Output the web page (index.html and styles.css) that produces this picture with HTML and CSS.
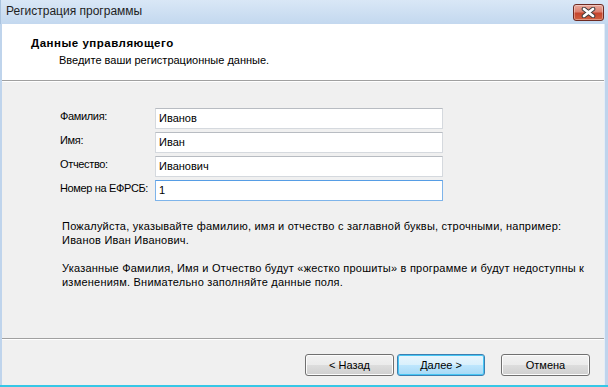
FILE: index.html
```html
<!DOCTYPE html>
<html lang="ru">
<head>
<meta charset="utf-8">
<title>Регистрация программы</title>
<link rel="stylesheet" href="styles.css">
</head>
<body>
<div class="window">
  <div class="titlebar">
    <span class="title">Регистрация программы</span>
    <span class="close">
      <svg width="15" height="11" viewBox="0 0 15 11">
        <path d="M3 2 L12 9 M12 2 L3 9" stroke="#3b3b3b" stroke-width="4.6" stroke-linecap="round"/>
        <path d="M3 2 L12 9 M12 2 L3 9" stroke="#ffffff" stroke-width="2.8" stroke-linecap="round"/>
      </svg>
    </span>
  </div>
  <div class="client">
    <div class="header">
      <div class="heading">Данные управляющего</div>
      <div class="subheading">Введите ваши регистрационные данные.</div>
    </div>
    <div class="content">
      <div class="form">
        <label class="label">Фамилия:</label>
        <div class="field">Иванов</div>
        <label class="label">Имя:</label>
        <div class="field">Иван</div>
        <label class="label">Отчество:</label>
        <div class="field">Иванович</div>
        <label class="label">Номер на ЕФРСБ:</label>
        <div class="field focus">1</div>
      </div>
      <p class="note">Пожалуйста, указывайте фамилию, имя и отчество с заглавной буквы, строчными, например:<br>Иванов Иван Иванович.</p>
      <p class="note">Указанные Фамилия, Имя и Отчество будут «жестко прошиты» в программе и будут недоступны к<br>изменениям. Внимательно заполняйте данные поля.</p>
    </div>
    <div class="footer">
      <button class="btn">&lt; Назад</button>
      <button class="btn default">Далее &gt;</button>
      <button class="btn cancel">Отмена</button>
    </div>
  </div>
</div>
</body>
</html>
```

FILE: styles.css
```css
html, body {
  margin: 0;
  padding: 0;
}
body {
  width: 608px;
  height: 387px;
  overflow: hidden;
  font-family: Tahoma, "Liberation Sans", Arial, sans-serif;
  font-size: 11px;
  color: #000;
}
.window {
  width: 608px;
  height: 387px;
  box-sizing: border-box;
  display: flex;
  flex-direction: column;
  background: #bfd4ec;
  border-bottom: 2px solid #36c7e6;
}
.titlebar {
  height: 24px;
  flex: 0 0 24px;
  display: flex;
  align-items: flex-start;
  background: linear-gradient(#d9e7f6, #c3d8ef);
  border-left: 1px solid #a9c3df;
}
.title {
  font-family: "Liberation Sans", Arial, sans-serif;
  font-size: 12px;
  line-height: 23px;
  padding-left: 5px;
  color: #1e1e1e;
}
.close {
  margin-left: auto;
  margin-right: 4px;
  margin-top: 4px;
  width: 31px;
  height: 17px;
  box-sizing: border-box;
  border: 1px solid #6d2a22;
  border-radius: 3px;
  background: linear-gradient(#e9a99c 0%, #dc8170 45%, #c6452d 55%, #d0603f 100%);
  box-shadow: inset 0 0 0 1px rgba(255,255,255,0.35);
  display: flex;
  align-items: center;
  justify-content: center;
}
.client {
  flex: 1;
  display: flex;
  flex-direction: column;
  margin-left: 2px;
  margin-right: 4px;
  background: #f0f0f0;
  box-shadow: 1px 0 0 #e4edf7;
}
.header {
  height: 57px;
  box-sizing: border-box;
  background: #fff;
  border-bottom: 1px solid #a0a0a0;
  padding: 13px 0 0 29px;
}
.heading {
  font-weight: bold;
  font-size: 11.5px;
  letter-spacing: 0.5px;
  line-height: 13px;
}
.subheading {
  line-height: 13px;
  margin-top: 4px;
  padding-left: 28px;
}
.content {
  flex: 1;
  padding: 26px 0 0 58px;
  border-top: 1px solid #fff;
}
.form {
  display: grid;
  grid-template-columns: 95px 288px;
  grid-auto-rows: 21px;
  row-gap: 3px;
  align-items: center;
}
.label {
  line-height: 13px;
  margin-top: -4px;
  white-space: nowrap;
  letter-spacing: -0.35px;
}
.field {
  height: 21px;
  box-sizing: border-box;
  background: #fff;
  border: 1px solid #d5d9de;
  border-top-color: #b8bcc2;
  padding: 0 3px;
  line-height: 19px;
}
.field.focus {
  border-color: #7eb4ea;
  border-top-color: #569de5;
}
.note {
  margin: 18px 0 0 2px;
  line-height: 14px;
  white-space: nowrap;
  letter-spacing: 0.22px;
}
.note + .note {
  margin-top: 14px;
}
.footer {
  height: 47px;
  box-sizing: border-box;
  border-top: 1px solid #a0a0a0;
  box-shadow: inset 0 1px 0 #fff;
  display: flex;
  align-items: flex-start;
  padding: 15px 14px 0 0;
  justify-content: flex-end;
}
.btn {
  width: 89px;
  height: 22px;
  margin: 0;
  padding: 0;
  font-family: inherit;
  font-size: 11px;
  color: #000;
  border: 1px solid #707070;
  border-radius: 3px;
  background: linear-gradient(#f2f2f2 0%, #ebebeb 50%, #dddddd 51%, #cfcfcf 100%);
  box-shadow: inset 0 0 0 1px #fcfcfc;
}
.btn.default {
  width: 88px;
  margin-left: 3px;
  border-color: #3c7fb1;
  background: linear-gradient(#eaf6fd 0%, #d9f0fc 50%, #bee6fd 51%, #a7d9f5 100%);
  box-shadow: inset 0 0 0 1px #48c6f4;
}
.btn.cancel {
  margin-left: 16px;
}
```
